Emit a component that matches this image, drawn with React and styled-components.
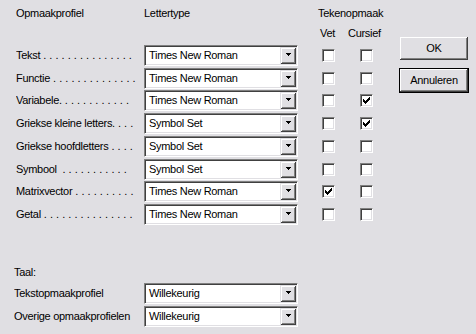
import React from "react";
import styled, { createGlobalStyle, css } from "styled-components";

const BG = "#e0dfe3";

const Global = createGlobalStyle`
  html, body { margin: 0; padding: 0; background: ${BG}; }
  body { font-family: "Liberation Sans", Arial, sans-serif; font-size: 11px; color: #000; }
`;

const Dialog = styled.div`
  width: 476px;
  height: 334px;
  box-sizing: border-box;
  display: flex;
  background: ${BG};
  font-family: "Liberation Sans", Arial, sans-serif;
  font-size: 11px;
  letter-spacing: -0.3px;
  line-height: 13px;
  color: #000;
  overflow: hidden;
`;

const Main = styled.div`
  width: 400px;
  flex: none;
  display: flex;
  flex-direction: column;
  padding: 7px 0 0 16px;
  box-sizing: border-box;
`;

const GridRow = styled.div`
  display: grid;
  grid-template-columns: 128px 174px 30px 37px;
  align-items: center;
  height: ${(p) => p.$h || 13}px;
  margin-top: ${(p) => p.$mt || 0}px;
`;

const HeadText = styled.span`
  white-space: pre;
  padding-left: ${(p) => p.$indent || 0}px;
  grid-column: ${(p) => p.$col || "auto"};
`;

const RowList = styled.div`
  display: flex;
  flex-direction: column;
  gap: 1.72px;
  margin-top: ${(p) => p.$mt || 0}px;
`;

const Label = styled.span`
  white-space: pre;
  overflow: hidden;
`;

const Dots = styled.span`
  letter-spacing: 0;
`;

const ComboBox = styled.div`
  box-sizing: border-box;
  width: 154px;
  height: 21px;
  border: 1px solid;
  border-color: #808080 #ffffff #ffffff #808080;
  box-shadow: inset 1px 1px #404040, inset -1px -1px ${BG};
  background: #fff;
  display: flex;
  padding: 1px;
`;

const ComboText = styled.span`
  flex: 1;
  padding-left: 3px;
  line-height: 17px;
  white-space: nowrap;
  overflow: hidden;
`;

const DropButton = styled.span`
  flex: none;
  width: 16px;
  height: 17px;
  box-sizing: border-box;
  background: ${BG};
  box-shadow: inset 1px 1px ${BG}, inset -1px -1px #404040, inset 2px 2px #ffffff,
    inset -2px -2px #808080;
  padding: 6px 0 0 6px;
  display: block;
`;

const Arrow = styled.svg`
  display: block;
`;

const CheckBox = styled.span`
  display: block;
  width: 13px;
  height: 13px;
  box-sizing: border-box;
  border: 1px solid;
  border-color: #808080 #ffffff #ffffff #808080;
  box-shadow: inset 1px 1px #404040, inset -1px -1px ${BG};
  background: #fff;
  margin-left: ${(p) => p.$indent || 0}px;
`;

const CheckMark = styled.svg`
  display: block;
`;

const Side = styled.div`
  display: flex;
  flex-direction: column;
  gap: 9px;
  padding-top: 37px;
`;

const Button = styled.button`
  width: 68px;
  height: 23px;
  box-sizing: border-box;
  margin: 0;
  padding: 0;
  border: none;
  background: ${BG};
  font: inherit;
  letter-spacing: inherit;
  color: #000;
  box-shadow: inset -1px -1px #404040, inset 1px 1px #ffffff, inset -2px -2px #808080,
    inset 2px 2px ${BG};
  ${(p) =>
    p.$default &&
    css`
      outline: 1px solid #000;
    `}
`;

const Bottom = styled.div`
  margin-left: -2px;
  display: flex;
  flex-direction: column;
`;

const TaalLabel = styled.div`
  height: 13px;
  margin-top: 41px;
`;

const BottomRow = styled.div`
  display: grid;
  grid-template-columns: 130px 154px;
  align-items: center;
  height: 21px;
`;

const BottomList = styled.div`
  display: flex;
  flex-direction: column;
  gap: 2px;
  margin-top: 4px;
`;

const Combo = ({ value }) => (
  <ComboBox>
    <ComboText>{value}</ComboText>
    <DropButton>
      <Arrow width="5" height="3" viewBox="0 0 5 3" shapeRendering="crispEdges">
        <path d="M0 0h5v1H0z M1 1h3v1H1z M2 2h1v1H2z" fill="#000" />
      </Arrow>
    </DropButton>
  </ComboBox>
);

const Check = ({ checked, indent }) => (
  <CheckBox $indent={indent}>
    {checked && (
      <CheckMark width="11" height="11" viewBox="0 0 11 11" shapeRendering="crispEdges">
        <path
          d="M2 4h1v3H2z M3 5h1v3H3z M4 6h1v3H4z M5 5h1v3H5z M6 4h1v3H6z M7 3h1v3H7z M8 2h1v3H8z"
          fill="#000"
        />
      </CheckMark>
    )}
  </CheckBox>
);

const TNR = "Times New Roman";
const SYM = "Symbol Set";

const rows = [
  { label: "Tekst", dots: 15, font: TNR },
  { label: "Functie", dots: 14, font: TNR },
  { label: "Variabele.", dots: 11, font: TNR, cursief: true },
  { label: "Griekse kleine letters.", dots: 3, font: SYM, cursief: true },
  { label: "Griekse hoofdletters", dots: 4, font: SYM },
  { label: "Symbool ", dots: 11, font: SYM },
  { label: "Matrixvector", dots: 10, font: TNR, vet: true },
  { label: "Getal", dots: 15, font: TNR },
];

export default function App() {
  return (
    <>
      <Global />
      <Dialog>
        <Main>
          <GridRow $h={13}>
            <HeadText>Opmaakprofiel</HeadText>
            <HeadText>Lettertype</HeadText>
            <HeadText $col="3 / 5">Tekenopmaak</HeadText>
          </GridRow>
          <GridRow $h={13} $mt={7}>
            <HeadText $col="3" $indent={2}>
              Vet
            </HeadText>
            <HeadText $col="4">Cursief</HeadText>
          </GridRow>
          <RowList $mt={5}>
            {rows.map((r) => (
              <GridRow key={r.label} $h={21}>
                <Label>
                  {r.label}
                  <Dots>{" .".repeat(r.dots)}</Dots>
                </Label>
                <Combo value={r.font} />
                <Check checked={r.vet} indent={4} />
                <Check checked={r.cursief} indent={12} />
              </GridRow>
            ))}
          </RowList>
          <Bottom>
            <TaalLabel>Taal:</TaalLabel>
            <BottomList>
              <BottomRow>
                <Label>Tekstopmaakprofiel</Label>
                <Combo value="Willekeurig" />
              </BottomRow>
              <BottomRow>
                <Label>Overige opmaakprofielen</Label>
                <Combo value="Willekeurig" />
              </BottomRow>
            </BottomList>
          </Bottom>
        </Main>
        <Side>
          <Button>OK</Button>
          <Button $default>Annuleren</Button>
        </Side>
      </Dialog>
    </>
  );
}
